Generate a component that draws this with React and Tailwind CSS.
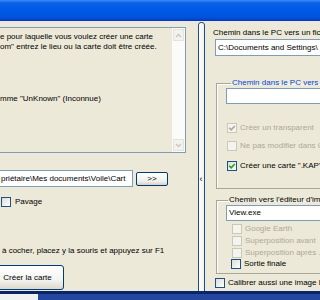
import React from "react";

function Check({ color }) {
  return (
    <svg width="8" height="8" viewBox="0 0 8 8">
      <path d="M1.2 3.8 L3.2 5.8 L6.8 2" fill="none" stroke={color} strokeWidth="1.6" />
    </svg>
  );
}

function Cb({ checked, disabled }) {
  return (
    <span
      className={
        disabled
          ? "w-[10px] h-[10px] flex-none border border-[#CAC8BB] bg-[#F4F3EE] flex items-center justify-center"
          : "w-[10px] h-[10px] flex-none border border-[#1C5180] bg-[linear-gradient(135deg,#DCDCD7,#FFFFFF)] flex items-center justify-center"
      }
    >
      {checked && <Check color={disabled ? "#ACA899" : "#21A121"} />}
    </span>
  );
}

function Row({ checked, disabled, label, className }) {
  return (
    <div className={"flex items-center gap-[3px] " + (className || "")}>
      <Cb checked={checked} disabled={disabled} />
      <span className={disabled ? "text-[#ACA899] whitespace-nowrap" : "text-black whitespace-nowrap"}>{label}</span>
    </div>
  );
}

export default function App() {
  return (
    <div className="w-[320px] h-[300px] overflow-hidden bg-[#ECE9D8] font-['Liberation_Sans',Arial,sans-serif] text-[8px] leading-[10px] text-black flex flex-col">
      {/* title bar */}
      <div className="h-[21px] flex-none bg-[linear-gradient(to_bottom,#3D8DF7_0%,#0A62E8_14%,#0058E6_55%,#0054DC_85%,#0343C2_100%)] border-b border-[#0831D9]" />
      <div className="flex flex-1 min-h-0">
        {/* left column */}
        <div className="w-[198px] flex-none flex flex-col">
          <div className="mt-[6px] w-[186px] h-[126px] border border-l-0 border-[#7F9DB9] flex">
            <div className="flex-1 pt-[4px] flex flex-col whitespace-nowrap overflow-hidden">
              <div>e pour laquelle vous voulez créer une carte</div>
              <div>om" entrez le lieu ou la carte doit être créée.</div>
              <div className="mt-[42px]">mme "UnKnown" (Inconnue)</div>
            </div>
            <div className="w-[13px] bg-[#FBFBF9] flex flex-col justify-between py-[1px]">
              <div className="h-[12px] mx-[1px] border border-[#E4E3DA] bg-[#F3F2EC] flex items-center justify-center">
                <svg width="7" height="5" viewBox="0 0 7 5"><path d="M1 4 L3.5 1.5 L6 4" fill="none" stroke="#C9C7BA" strokeWidth="1.3" /></svg>
              </div>
              <div className="h-[12px] mx-[1px] border border-[#E4E3DA] bg-[#F3F2EC] flex items-center justify-center">
                <svg width="7" height="5" viewBox="0 0 7 5"><path d="M1 1 L3.5 3.5 L6 1" fill="none" stroke="#C9C7BA" strokeWidth="1.3" /></svg>
              </div>
            </div>
          </div>
          <div className="mt-[17px] flex items-center gap-[3px]">
            <div className="w-[133px] h-[17px] border border-l-0 border-[#7F9DB9] bg-white flex items-center overflow-hidden whitespace-nowrap pl-[1px]">
              priétaire\Mes documents\Voile\Cart
            </div>
            <div className="w-[32px] h-[14px] border border-[#003C74] rounded-[2px] bg-[linear-gradient(to_bottom,#FFFFFF,#F0F0EA_70%,#D6D0C5)] flex items-center justify-center">
              &gt;&gt;
            </div>
          </div>
          <Row className="mt-[10px] ml-[1px] gap-[4px]" label="Pavage" />
          <div className="mt-[39px] ml-[2px] whitespace-nowrap">à cocher, placez y la souris et appuyez sur F1</div>
          <div className="mt-[9px] -ml-[9px] w-[73px] h-[25px] border border-[#003C74] rounded-[3px] bg-[linear-gradient(to_bottom,#FFFFFF,#F4F4F0_60%,#DCD8CC)] flex items-center justify-center">
            Créer la carte
          </div>
        </div>
        {/* splitter */}
        <div className="w-[7px] flex-none mt-[1px] -mb-[5px] border border-[#1C4E84] rounded-[3px] bg-[linear-gradient(to_right,#FFFFFF,#F2F1EA)] flex flex-col items-center">
          <span className="mt-[152px] -ml-[1px] text-[9px] leading-[8px]">‹</span>
        </div>
        {/* right column */}
        <div className="flex-1 min-w-0 overflow-hidden pl-[8px] pt-[7px] flex flex-col">
          <div className="whitespace-nowrap">Chemin dans le PC vers un fichier</div>
          <div className="mt-[1px] ml-[2px] w-[140px] h-[17px] border border-[#7F9DB9] bg-white flex items-center pl-[2px] whitespace-nowrap">
            C:\Documents and Settings\
          </div>
          <fieldset className="mt-[22px] ml-[3px] w-[140px] h-[111px] border border-[#A7A69A] shadow-[inset_1px_1px_0_#FFFFFF] pl-[9px] flex-none">
            <legend className="ml-[5px] px-[1px] text-[#0046D5] whitespace-nowrap">Chemin dans le PC vers un fichier</legend>
            <div className="w-[130px] h-[16px] border border-[#7F9DB9] bg-white" />
            <Row className="mt-[19px] ml-[1px]" checked disabled label="Créer un transparent" />
            <Row className="mt-[8px] ml-[1px]" disabled label="Ne pas modifier dans Ozi" />
            <Row className="mt-[10px] ml-[1px]" checked label={'Créer une carte ".KAP"'} />
          </fieldset>
          <fieldset className="mt-[6px] ml-[3px] w-[140px] h-[79px] border border-[#A7A69A] shadow-[inset_1px_1px_0_#FFFFFF] pl-[9px] flex-none">
            <legend className="ml-[2px] px-[1px] whitespace-nowrap">Chemin vers l'éditeur d'image</legend>
            <div className="w-[130px] h-[16px] border border-[#7F9DB9] bg-white flex items-center pl-[2px] whitespace-nowrap">View.exe</div>
            <Row className="mt-[3px] ml-[6px]" disabled label="Google Earth" />
            <Row className="mt-[2px] ml-[6px]" disabled label="Superposition avant" />
            <Row className="mt-[2px] ml-[6px]" disabled label="Superposition après ." />
            <Row className="mt-[1px] ml-[5px]" label="Sortie finale" />
          </fieldset>
          <Row className="mt-[4px] ml-[2px] gap-[2px]" label="Calibrer aussi une image Bitmap" />
        </div>
      </div>
      <div className="h-[3px] flex-none bg-[#0A246A]" />
      <div className="h-[6px] flex-none flex">
        <div className="w-[38px] bg-[#F0F0F0]" />
        <div className="flex-1 bg-[#24469C]" />
      </div>
    </div>
  );
}
